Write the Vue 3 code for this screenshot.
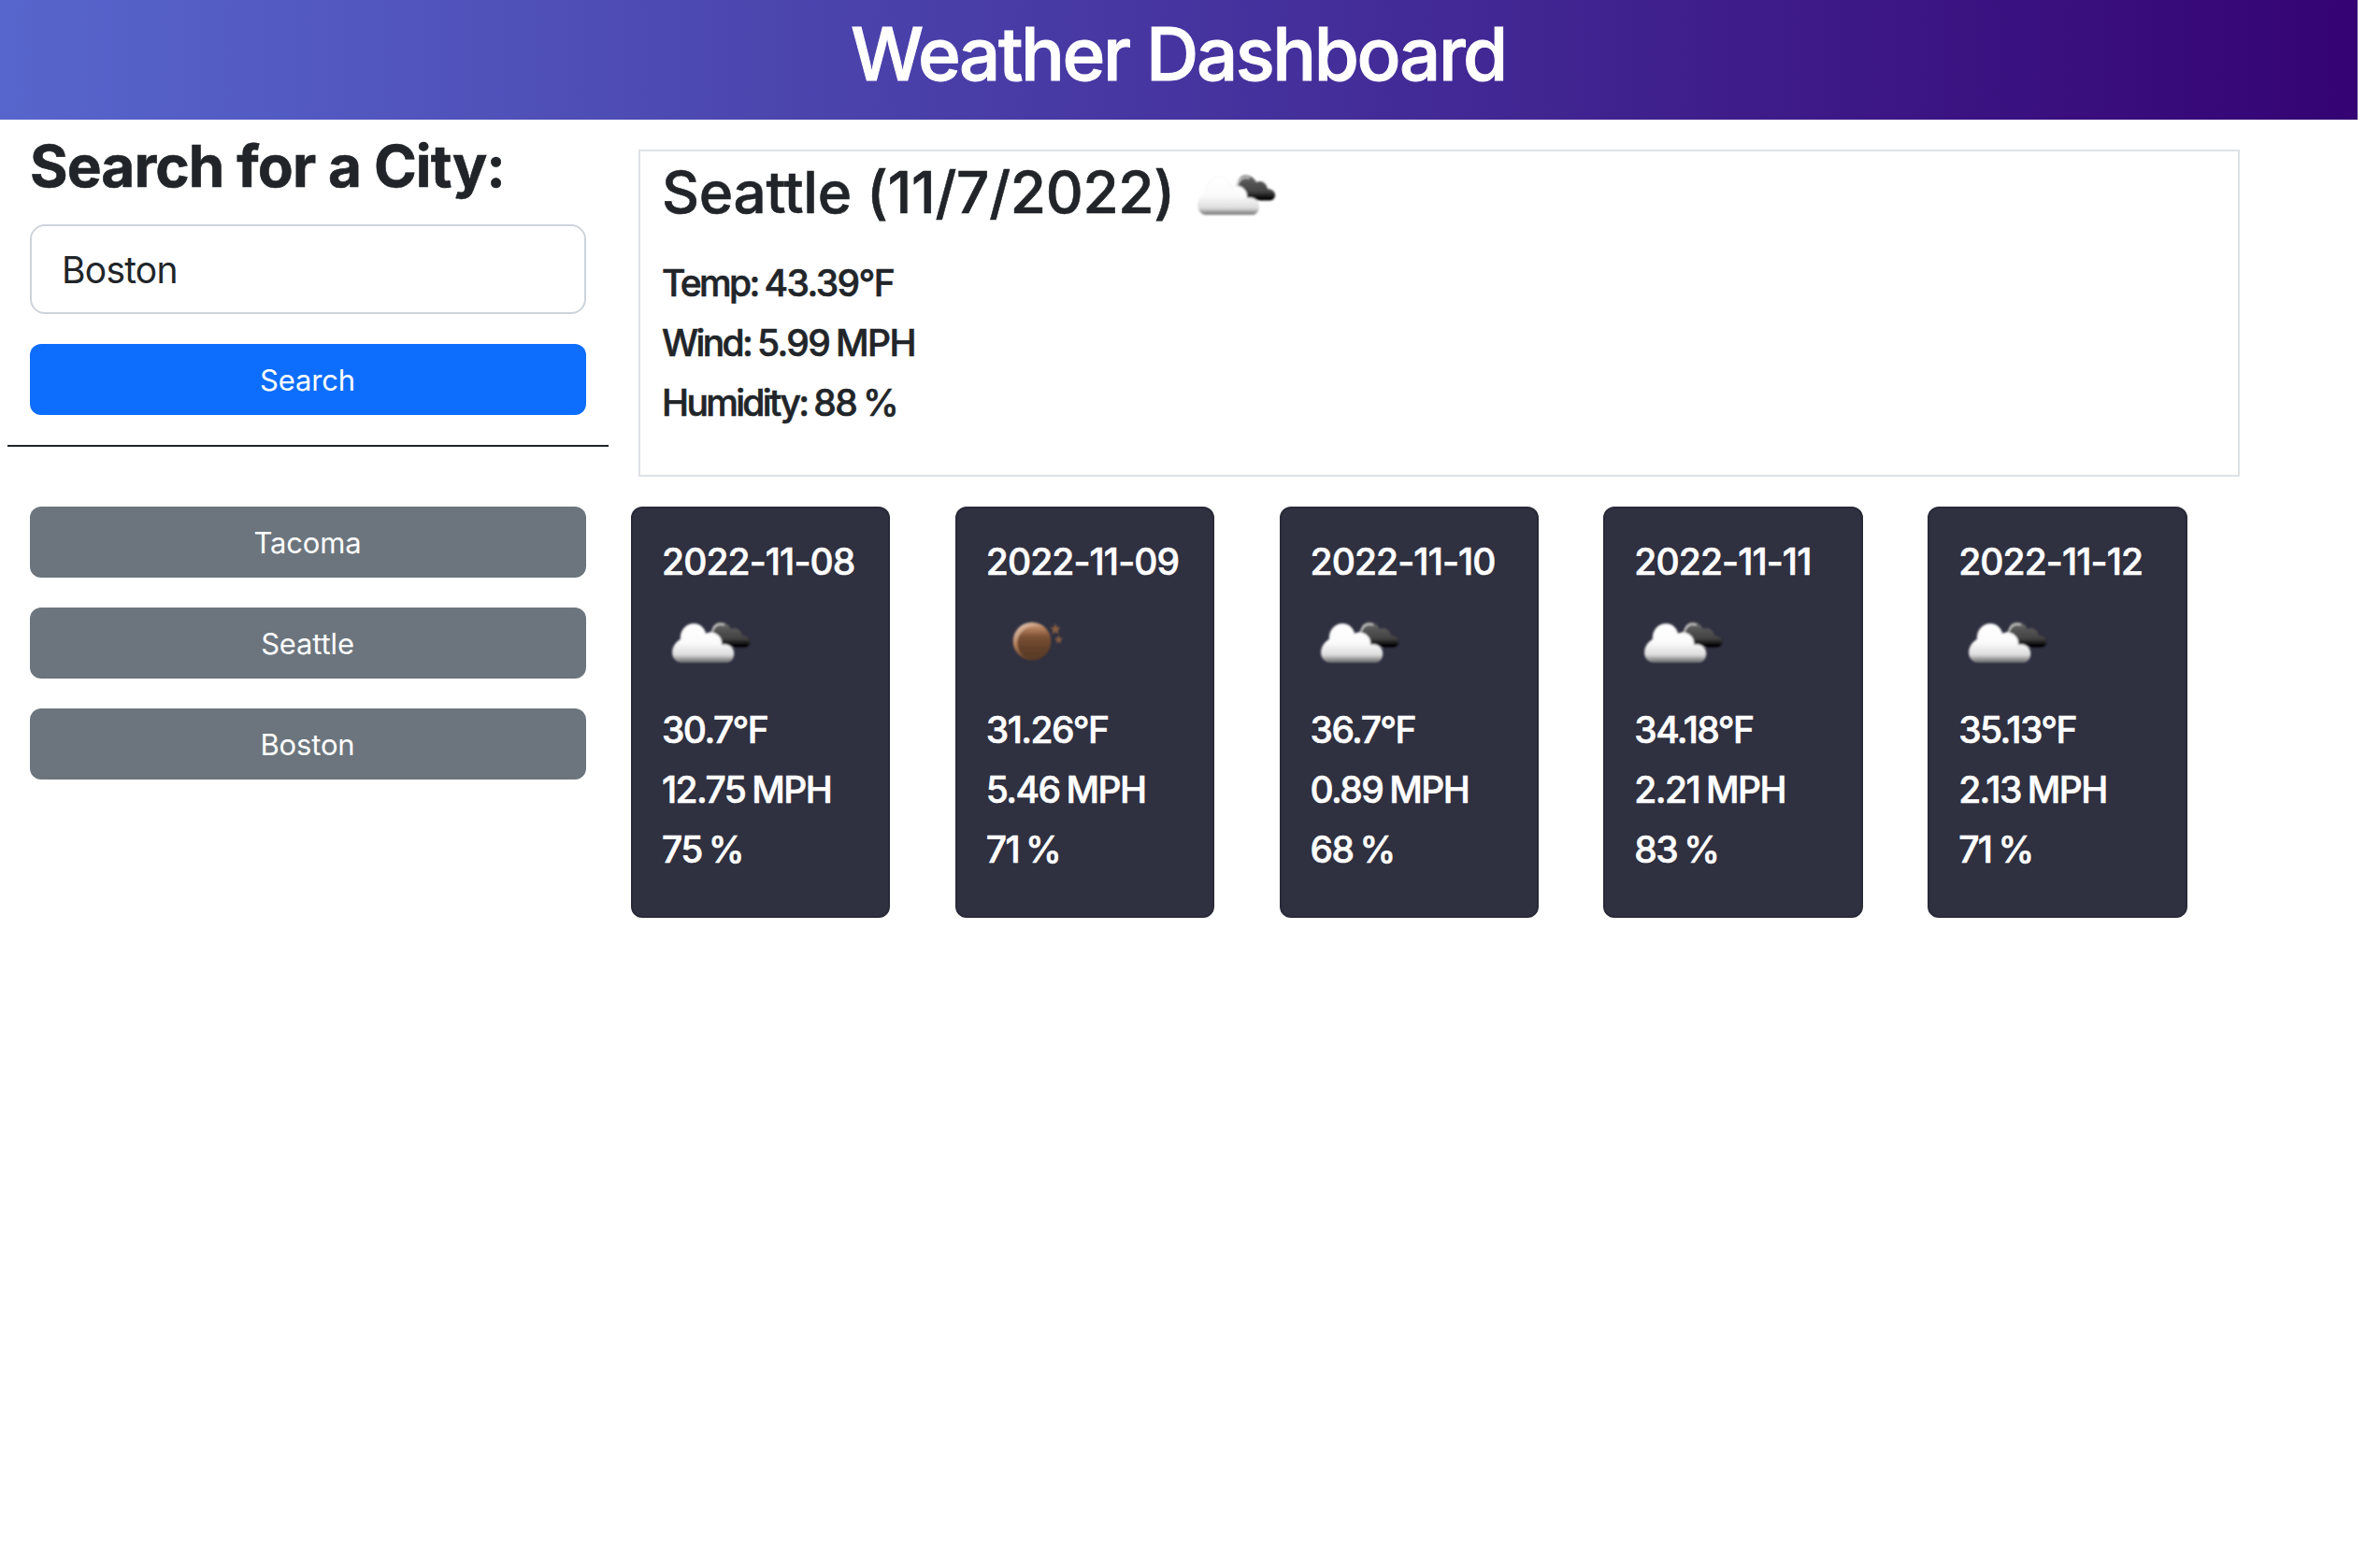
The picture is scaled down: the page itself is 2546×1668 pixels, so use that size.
<script setup>
import { ref } from 'vue'

const cities = ['Tacoma', 'Seattle', 'Boston']
const current = [
  { label: 'Temp:', value: '43.39°F' },
  { label: 'Wind:', value: '5.99 MPH' },
  { label: 'Humidity:', value: '88 %' },
]
const days = [
  { date: '2022-11-08', icon: 'cloud', temp: '30.7', wind: '12.75', humidity: 75 },
  { date: '2022-11-09', icon: 'moon', temp: '31.26', wind: '5.46', humidity: 71 },
  { date: '2022-11-10', icon: 'cloud', temp: '36.7', wind: '0.89', humidity: 68 },
  { date: '2022-11-11', icon: 'cloud', temp: '34.18', wind: '2.21', humidity: 83 },
  { date: '2022-11-12', icon: 'cloud', temp: '35.13', wind: '2.13', humidity: 71 },
]
const city = ref('Boston')
</script>

<template>
  <svg class="defs" width="0" height="0" aria-hidden="true">
    <defs>
      <linearGradient id="white-cloud" x1="0" y1="0" x2="0" y2="1">
        <stop offset="0" stop-color="#fff" />
        <stop offset=".5" stop-color="#fbfbfb" />
        <stop offset=".82" stop-color="#dcdcdc" />
        <stop offset=".92" stop-color="#a0a0a0" />
        <stop offset="1" stop-color="#666" />
      </linearGradient>
      <linearGradient id="dark-cloud" x1="0" y1="0" x2="0" y2="1">
        <stop offset="0" stop-color="#707070" />
        <stop offset=".3" stop-color="#555" />
        <stop offset=".65" stop-color="#444" />
        <stop offset=".9" stop-color="#080808" />
        <stop offset="1" stop-color="#000" />
      </linearGradient>
      <linearGradient id="moon-body" x1="0" y1="0" x2="0" y2="1">
        <stop offset="0" stop-color="#c08a66" />
        <stop offset=".3" stop-color="#7d5236" />
        <stop offset=".6" stop-color="#66432b" />
        <stop offset="1" stop-color="#573a26" />
      </linearGradient>
      <linearGradient id="moon-rim" x1="0" y1="0" x2=".6" y2="1">
        <stop offset="0" stop-color="#f0d8c8" />
        <stop offset=".5" stop-color="#b07a55" />
        <stop offset=".8" stop-color="#6b452c" />
      </linearGradient>
      <filter id="soft" x="-10%" y="-10%" width="120%" height="120%">
        <feGaussianBlur stdDeviation=".8" />
      </filter>
      <symbol id="cloud" viewBox="0 0 100 100">
        <g filter="url(#soft)">
          <path fill="url(#dark-cloud)" d="M54 44C52 34 56 27 63 27.500C69 28 72 31 74 35C79 32 85 36 86 42C91 42 95 46 94 50C93 53 91 54.500 88 54.500H66Z" />
          <path fill="none" stroke="#c8c8c8" stroke-width="1.800" d="M51 40C53 39 54 38 54.500 36C56 31 61 28.500 67 30.500" />
          <path fill="url(#white-cloud)" stroke="#eaeaea" stroke-width=".5" d="M20 70C9 69 8 53 20 46C19 27 43 23 47 40C55 36 65 42 64 52C71 50 77 55 77 61C77 66 74 70 70 70Z" />
        </g>
      </symbol>
      <symbol id="moon" viewBox="0 0 100 100">
        <g filter="url(#soft)">
          <circle cx="49" cy="48" r="20.300" fill="url(#moon-rim)" />
          <circle cx="50.800" cy="50" r="17.500" fill="url(#moon-body)" />
          <path fill="#865d43" d="M74 29l1.600 4 4 .2-3 2.800 1 4.500-3.600-2.300-3.600 2.300 1-4.500-3-2.800 4-.2z" />
          <path fill="#865d43" d="M77.500 41.500l1.300 3 3.200.2-2.500 2.200.8 3.600-2.800-1.800-2.800 1.800.8-3.600-2.500-2.200 3.200-.2z" />
        </g>
      </symbol>
    </defs>
  </svg>
  <header class="banner"><h1>Weather Dashboard</h1></header>
  <main class="layout">
    <aside class="sidebar">
      <form class="search" @submit.prevent>
        <h2>Search for a City:</h2>
        <input v-model="city" type="text" aria-label="City" />
        <button class="btn primary" type="submit">Search</button>
      </form>
      <hr />
      <div class="history">
        <button v-for="c in cities" :key="c" class="btn secondary" type="button">{{ c }}</button>
      </div>
    </aside>
    <section class="content">
      <article class="today">
        <div class="heading">
          <h2>Seattle (11/7/2022)</h2>
          <svg class="icon"><use href="#cloud" /></svg>
        </div>
        <p v-for="row in current" :key="row.label"><span class="label">{{ row.label }}</span> {{ row.value }}</p>
      </article>
      <div class="forecast">
        <article v-for="d in days" :key="d.date" class="card">
          <h3>{{ d.date }}</h3>
          <svg class="icon"><use :href="'#' + d.icon" /></svg>
          <p>{{ d.temp }}°F</p>
          <p>{{ d.wind }} MPH</p>
          <p>{{ d.humidity }} %</p>
        </article>
      </div>
    </section>
  </main>
</template>

<style>
body {
  background: #fff;
}
</style>

<style scoped>
* {
  box-sizing: border-box;
}
.defs {
  display: block;
}
.banner,
.layout {
  width: 2522px;
  font-family: Inter, 'Liberation Sans', sans-serif;
  color: #212529;
}
h1,
h2,
h3,
p {
  margin: 0;
  font-weight: 500;
  white-space: nowrap;
  -webkit-text-stroke: 0.6px currentColor;
}
.banner {
  height: 128px;
  padding: 10px 1px 22px 0;
  background: linear-gradient(90deg, #5766cc, #350373);
  color: #fff;
  text-align: center;
}
h1 {
  font-size: 78px;
  line-height: 96px;
  letter-spacing: -2.440px;
  -webkit-text-stroke-width: 1px;
}
.layout {
  display: flex;
  align-items: flex-start;
}
.sidebar {
  width: 643px;
  margin-left: 8px;
}
.search,
.history {
  display: flex;
  flex-direction: column;
  gap: 32px;
  padding: 0 24px;
}
.search h2 {
  margin: 10px 0 -9px;
  font-size: 62px;
  font-weight: 700;
  line-height: 79px;
  letter-spacing: -0.900px;
}
.search input {
  height: 96px;
  padding: 0 32px;
  border: 2px solid #ced4da;
  border-radius: 16px;
  background: #fff;
  color: #212529;
  font: 400 39px/60px Inter, 'Liberation Sans', sans-serif;
  letter-spacing: -0.750px;
}
.btn {
  height: 76px;
  padding: 2px 1px 0 0;
  border: 0;
  border-radius: 12px;
  color: #fff;
  font: 400 31px/48px Inter, 'Liberation Sans', sans-serif;
  letter-spacing: -0.150px;
}
.primary {
  background: #0d6efd;
}
.secondary {
  background: #6c757d;
}
hr {
  height: 2px;
  margin: 32px 0 64px;
  border: 0;
  background: #212529;
}
.content {
  margin-left: 24px;
}
.today {
  width: 1713px;
  height: 350px;
  margin: 32px 0 32px 8px;
  padding: 0 23px;
  border: 2px solid #dee2e6;
}
.heading {
  display: flex;
  align-items: center;
  height: 95px;
  margin-bottom: 22px;
}
.heading h2 {
  margin-bottom: 8px;
  font-size: 62px;
  line-height: 76px;
  letter-spacing: -0.300px;
}
.heading .icon {
  margin-left: 13px;
}
.icon {
  display: block;
  flex: none;
  width: 100px;
  height: 100px;
}
.today p,
.card p,
.card h3 {
  margin-bottom: 16px;
  font-size: 39px;
  line-height: 48px;
}
.today p {
  letter-spacing: -1.600px;
  word-spacing: -2px;
}
.today .label {
  letter-spacing: -2.650px;
}
.forecast {
  display: flex;
  gap: 69.400px;
}
.card {
  width: 277.400px;
  height: 440px;
  padding: 33px 31px;
  border: 2px solid #292a38;
  border-radius: 12px;
  background: #2f3040;
  color: #fff;
}
.card h3 {
  margin-bottom: 13px;
  letter-spacing: -0.900px;
}
.card .icon {
  margin-bottom: 19px;
}
.card p {
  letter-spacing: -1.600px;
  word-spacing: -1.800px;
}
</style>
